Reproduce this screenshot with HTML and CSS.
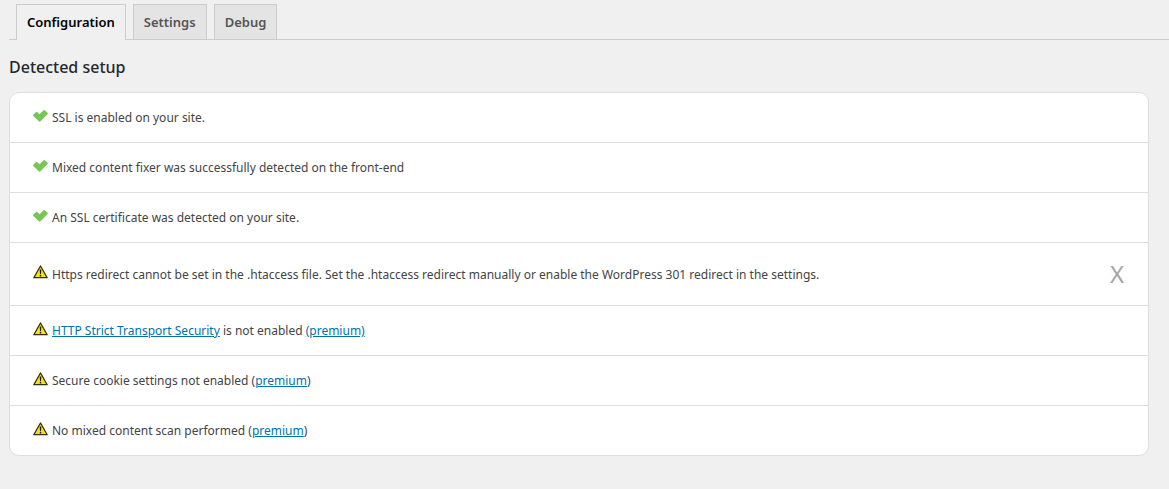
FILE: index.html
```html
<!DOCTYPE html>
<html lang="en">
<head>
    <meta charset="UTF-8">
    <meta name="viewport" content="width=device-width, initial-scale=1.0">
    <title>SSL Configuration</title>
    <link rel="stylesheet" href="styles.css">
</head>
<body>

<svg class="icon-defs" aria-hidden="true">
    <symbol id="check" viewBox="0 0 15 12">
        <path d="M0.3 4.8 L3 2 Q3.6 1.5 4.2 2 L6.5 4.2 L10.7 0.3 Q11.3 -0.1 11.9 0.3 L14.7 2.9 Q15.2 3.5 14.7 4.1 L7.3 11.5 Q6.7 12 6.1 11.5 L0.3 6 Q-0.2 5.4 0.3 4.8 Z" fill="#7ac655"/>
    </symbol>
    <symbol id="warning" viewBox="0 0 15 14">
        <path d="M7.5 1 L14.2 12.7 H0.8 Z" fill="#f4e416" stroke="#33300c" stroke-width="1.3" stroke-linejoin="round"/>
        <path d="M6.7 4.6 H8.3 L8 9.2 H7 Z M6.8 10 H8.2 V11.4 H6.8 Z" fill="#1c1b08"/>
    </symbol>
</svg>

<nav class="tabs">
    <a href="#configuration" class="tab active">Configuration</a>
    <a href="#settings" class="tab">Settings</a>
    <a href="#debug" class="tab">Debug</a>
</nav>

<main id="configuration">
    <h2>Detected setup</h2>

    <ul class="checks">
        <li>
            <svg class="icon check"><use href="#check"/></svg>
            <span class="message">SSL is enabled on your site.</span>
        </li>
        <li>
            <svg class="icon check"><use href="#check"/></svg>
            <span class="message">Mixed content fixer was successfully detected on the front-end</span>
        </li>
        <li>
            <svg class="icon check"><use href="#check"/></svg>
            <span class="message">An SSL certificate was detected on your site.</span>
        </li>
        <li>
            <svg class="icon warning"><use href="#warning"/></svg>
            <span class="message">Https redirect cannot be set in the .htaccess file. Set the .htaccess redirect manually or enable the WordPress 301 redirect in the settings.</span>
            <button type="button" class="dismiss" title="Dismiss">X</button>
        </li>
        <li>
            <svg class="icon warning"><use href="#warning"/></svg>
            <span class="message"><a href="#hsts">HTTP Strict Transport Security</a> is not enabled <a href="#premium">(premium)</a></span>
        </li>
        <li>
            <svg class="icon warning"><use href="#warning"/></svg>
            <span class="message">Secure cookie settings not enabled (<a href="#premium">premium</a>)</span>
        </li>
        <li>
            <svg class="icon warning"><use href="#warning"/></svg>
            <span class="message">No mixed content scan performed (<a href="#premium">premium</a>)</span>
        </li>
    </ul>
</main>

</body>
</html>
```

FILE: styles.css
```css
* {
    box-sizing: border-box;
}

body {
    margin: 0;
    padding: 4px 0 20px 9px;
    background: #f0f0f0;
    color: #444;
    font-family: "Segoe UI", "Noto Sans", sans-serif;
    font-size: 12px;
    line-height: 19px;
}

.icon-defs {
    display: none;
}

.tabs {
    display: flex;
    gap: 7px;
    padding-left: 7px;
    border-bottom: 1px solid #ccc;
}

.tab {
    padding: 5px 10px;
    border: 1px solid #ccc;
    border-bottom: none;
    background: #e4e4e4;
    color: #555;
    font-size: 13px;
    font-weight: 600;
    line-height: 24px;
    text-decoration: none;
}

.tab.active {
    margin-bottom: -1px;
    padding-bottom: 6px;
    background: #f0f0f0;
    color: #000;
}

h2 {
    margin: 16px 0 14px;
    color: #23282d;
    font-size: 16px;
    font-weight: 500;
    line-height: 22px;
}

.checks {
    margin: 0 20px 0 0;
    padding: 0;
    border: 1px solid #dedede;
    border-radius: 10px;
    background: #fff;
    list-style: none;
}

.checks li {
    display: flex;
    align-items: center;
    padding: 15px 24px 15px 23px;
    border-bottom: 1px solid #dedede;
}

.checks li:last-child {
    border-bottom: none;
}

.icon {
    flex: none;
    width: 15px;
    margin: 0 4px 4px 0;
}

.check {
    height: 12px;
}

.warning {
    height: 14px;
}

.message {
    flex: 1;
}

.message a {
    color: #0073aa;
}

.dismiss {
    padding: 0;
    border: none;
    background: none;
    color: #a5a5a5;
    font: 24px/32px "Segoe UI", "Noto Sans", sans-serif;
    cursor: pointer;
}
```
